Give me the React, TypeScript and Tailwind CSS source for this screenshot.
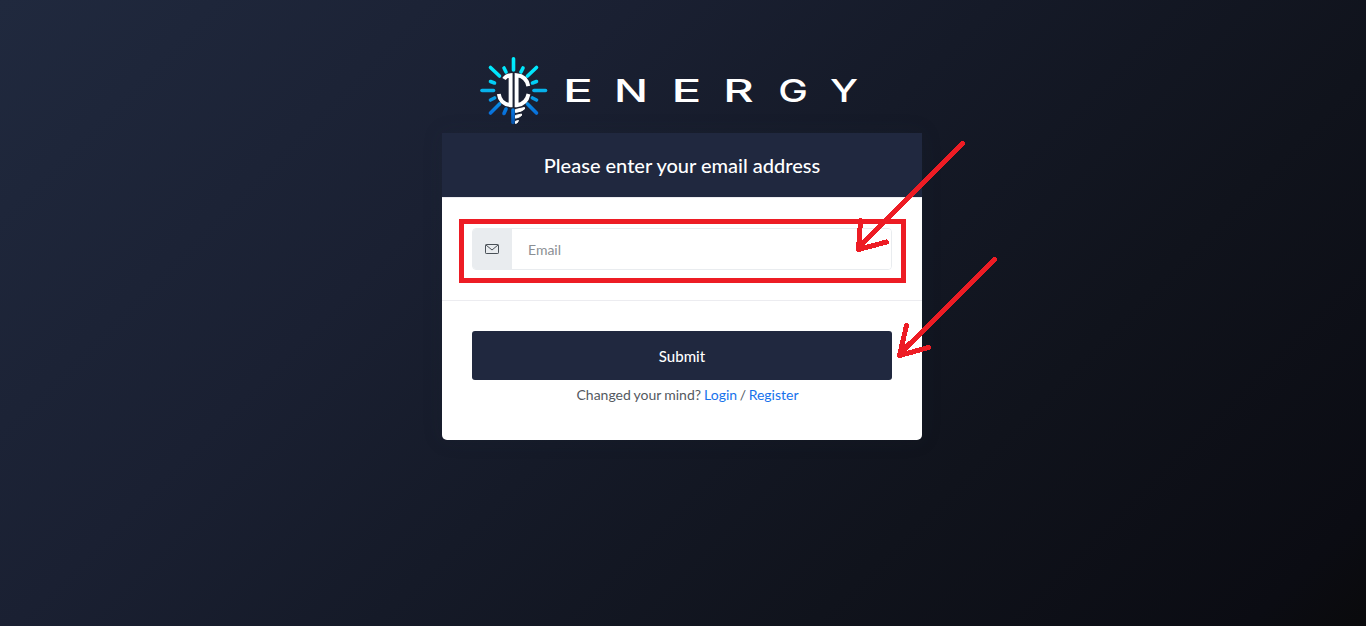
const rays = [
  'M43.5 8.8V20', 'M20.5 17.5L29.5 26', 'M66.5 17.5L57.5 26', 'M34 18L36 22', 'M53 18L51 22',
  'M20.5 31.5L24.5 33', 'M66.5 31.5L62.5 33', 'M12 40.5H23.5', 'M64 40.5H75.5',
  'M24.5 48L20.5 50', 'M62.5 48L66.5 50', 'M29.5 54L20.5 63', 'M57.5 54L66.5 63',
  'M36 59L34 63.5', 'M43 60V72.5',
];

function Emblem() {
  return (
    <svg className="h-20 w-[90px] shrink-0" viewBox="0 0 90 80" fill="none">
      <defs>
        <linearGradient id="glow" gradientUnits="userSpaceOnUse" x1="0" y1="8" x2="0" y2="73">
          <stop offset="0" stopColor="#00f0ff" />
          <stop offset="0.28" stopColor="#00e2fc" />
          <stop offset="0.55" stopColor="#08a8e8" />
          <stop offset="0.85" stopColor="#0870dc" />
          <stop offset="1" stopColor="#0755ae" />
        </linearGradient>
      </defs>
      {rays.map((d) => (
        <path key={d} d={d} stroke="url(#glow)" strokeWidth="3.6" strokeLinecap="round" />
      ))}
      <g stroke="#fff" strokeWidth="3.9">
        <path d="M34 29Q36 25.6 40.6 25.2V55.2C34 54.5 29.7 50.5 28.8 44" />
        <path d="M58.3 36.2C57 29.5 52.5 25.6 46.6 25.2V55.2C53 54.5 57.2 50.5 58.5 44" />
      </g>
      <g fill="#fff" stroke="#fff" strokeWidth="1" strokeLinejoin="round">
        <path d="M45.5 59.5L54.5 57.5V59Q52 61.5 45.5 62.5Z" />
        <path d="M45.5 65.4L51.5 64V65.5Q49 67.8 45.5 68.2Z" />
        <path d="M45.5 71.2L48.5 70.5Q48 73 45.5 73.5Z" />
      </g>
    </svg>
  );
}

const letters = [
  { c: 'E', at: 'translate(8 36.7) scale(1.6 1)' },
  { c: 'N', at: 'translate(59 36.7) scale(1.45 1)' },
  { c: 'E', at: 'translate(116.5 36.7) scale(1.6 1)' },
  { c: 'R', at: 'translate(168.2 36.7) scale(1.52 1)' },
  { c: 'G', at: 'translate(223.3 36.7) scale(1.28 1)' },
  { c: 'Y', at: 'translate(275 36.7) scale(1.3 1)' },
];

function Wordmark() {
  return (
    <svg className="mt-[15px] h-[50px] w-[320px] shrink-0" viewBox="0 0 320 50" role="img" aria-label="ENERGY">
      {letters.map((l, i) => (
        <text key={i} transform={l.at} fill="#fff" fontFamily="Inter, sans-serif" fontSize="31" fontWeight="500">
          {l.c}
        </text>
      ))}
    </svg>
  );
}

function Annotations() {
  return (
    <svg className="pointer-events-none absolute top-0 left-0 h-[626px] w-[1366px]" viewBox="0 0 1366 626" fill="none" stroke="#ed1c24" strokeWidth="5" strokeLinecap="round" strokeLinejoin="round" shapeRendering="crispEdges">
      <rect x="461.5" y="221.5" width="442" height="59" strokeLinejoin="miter" />
      <path d="M962.5 143.5L858.5 248M860.5 220.5L858.5 249.5L886.5 242" />
      <path d="M994.5 259.5L899.5 354M906.5 325.5L899.5 355.5L928.5 347.5" />
    </svg>
  );
}

export default function App() {
  return (
    <main className="relative flex h-[626px] w-[1366px] flex-col overflow-hidden bg-[linear-gradient(135deg,#20293e_0%,#1a2032_32%,#151a28_50%,#10131c_72%,#0b0c13_94%,#0a0a0c_100%)] pl-[442px] font-['Lato',sans-serif] text-sm text-[#54595f]">
      <header className="flex h-[133px] w-[480px] items-start pt-[50px] pl-7">
        <Emblem />
        <div className="-ml-[5px]"><Wordmark /></div>
      </header>
      <section className="flex h-[307px] w-[480px] flex-col overflow-hidden rounded-b-[5px] bg-white shadow-[0_0_20px_rgba(31,45,61,0.15)]">
        <h1 className="flex h-16 shrink-0 items-center justify-center bg-[#20283f] text-xl font-medium text-white">
          Please enter your email address
        </h1>
        <div className="h-[104px] shrink-0 border-t border-b border-[#ececf0] px-[30px] pt-[30px]">
          <label className="flex h-[42px] overflow-hidden rounded-[4px] border border-[#e9ecef]">
            <span className="flex w-[39px] items-center justify-center bg-[#e9ecef] pr-px">
              <svg className="h-[10px] w-[14px]" viewBox="0 0 14 10" fill="none" stroke="#495057">
                <rect x=".5" y=".5" width="13" height="9" rx=".7" />
                <path d="M1 1L7 6L13 1" />
              </svg>
            </span>
            <input className="min-w-0 flex-1 bg-white px-4 pt-px outline-none placeholder:text-[#8b8f94]" placeholder="Email" type="email" />
          </label>
        </div>
        <div className="flex flex-col px-[30px] pt-[30px]">
          <button className="h-[49px] rounded-[3px] bg-[#20283f] pt-[2px] text-[15px] font-medium text-white">Submit</button>
          <p className="mt-1 pl-[11px] text-center leading-[21px] [word-spacing:-0.5px]">
            Changed your mind? <a className="text-[#1672ec]" href="#login">Login</a><span className="[word-spacing:-1px]"> / </span><a className="text-[#1672ec]" href="#register">Register</a>
          </p>
        </div>
      </section>
      <Annotations />
    </main>
  );
}
